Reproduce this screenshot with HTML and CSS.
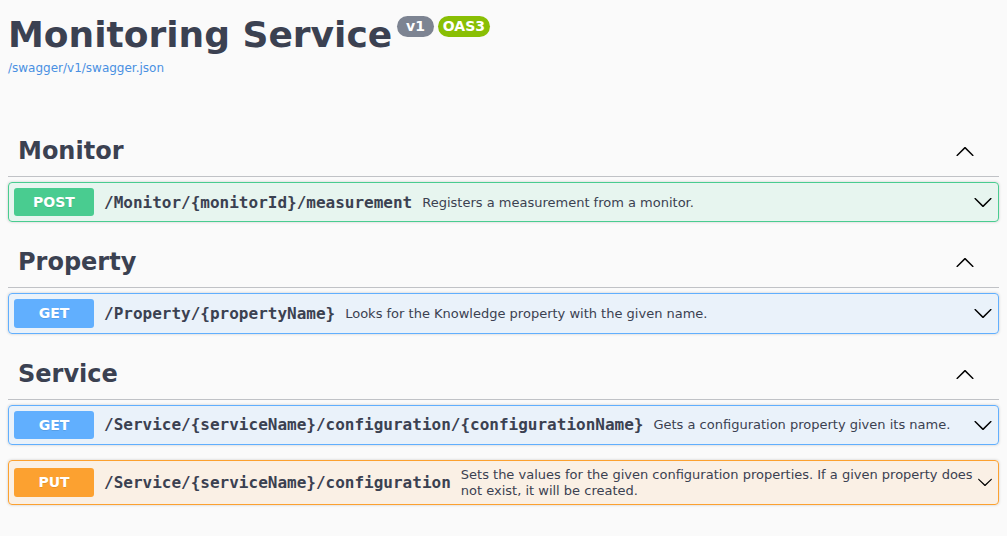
FILE: index.html
```html
<!DOCTYPE html>
<html lang="en">
<head>
<meta charset="utf-8">
<title>Monitoring Service</title>
<link rel="stylesheet" href="styles.css">
</head>
<body>
<div class="page">
  <header class="info">
    <h2 class="title">
      <span class="title-text">Monitoring Service</span>
      <small class="badge badge-version"><span class="badge-text"> v1 </span></small>
      <small class="badge badge-oas"><span class="badge-text">OAS3</span></small>
    </h2>
    <a class="spec-link" href="#">/swagger/v1/swagger.json</a>
  </header>

  <section class="tag-section">
    <h3 class="tag">
      <span class="tag-name">Monitor</span>
      <button class="expand">
        <svg class="arrow" width="20" height="20" viewBox="0 0 20 20"><path d="M17.418 14.908c.272.268.709.268.979 0s.27-.701 0-.969l-7.908-7.83c-.27-.268-.707-.268-.979 0l-7.908 7.830c-.27.268-.27.701 0 .969.271.268.709.268.979 0L10 7.767l7.418 7.141z"/></svg>
      </button>
    </h3>
    <div class="op op-post">
      <span class="method">POST</span>
      <span class="path">/Monitor/{monitorId}/measurement</span>
      <div class="desc">Registers a measurement from a monitor.</div>
      <button class="toggle">
        <svg class="arrow" width="20" height="20" viewBox="0 0 20 20"><path d="M17.418 6.109c.272-.268.709-.268.979 0s.271.701 0 .969l-7.908 7.83c-.27.268-.707.268-.979 0l-7.908-7.83c-.27-.268-.27-.701 0-.969.271-.268.709-.268.979 0L10 13.25l7.418-7.141z"/></svg>
      </button>
    </div>
  </section>

  <section class="tag-section">
    <h3 class="tag">
      <span class="tag-name">Property</span>
      <button class="expand">
        <svg class="arrow" width="20" height="20" viewBox="0 0 20 20"><path d="M17.418 14.908c.272.268.709.268.979 0s.27-.701 0-.969l-7.908-7.83c-.27-.268-.707-.268-.979 0l-7.908 7.830c-.27.268-.27.701 0 .969.271.268.709.268.979 0L10 7.767l7.418 7.141z"/></svg>
      </button>
    </h3>
    <div class="op op-get">
      <span class="method">GET</span>
      <span class="path">/Property/{propertyName}</span>
      <div class="desc">Looks for the Knowledge property with the given name.</div>
      <button class="toggle">
        <svg class="arrow" width="20" height="20" viewBox="0 0 20 20"><path d="M17.418 6.109c.272-.268.709-.268.979 0s.271.701 0 .969l-7.908 7.83c-.27.268-.707.268-.979 0l-7.908-7.83c-.27-.268-.27-.701 0-.969.271-.268.709-.268.979 0L10 13.25l7.418-7.141z"/></svg>
      </button>
    </div>
  </section>

  <section class="tag-section">
    <h3 class="tag">
      <span class="tag-name">Service</span>
      <button class="expand">
        <svg class="arrow" width="20" height="20" viewBox="0 0 20 20"><path d="M17.418 14.908c.272.268.709.268.979 0s.27-.701 0-.969l-7.908-7.83c-.27-.268-.707-.268-.979 0l-7.908 7.830c-.27.268-.27.701 0 .969.271.268.709.268.979 0L10 7.767l7.418 7.141z"/></svg>
      </button>
    </h3>
    <div class="op op-get">
      <span class="method">GET</span>
      <span class="path">/Service/{serviceName}/configuration/{configurationName}</span>
      <div class="desc">Gets a configuration property given its name.</div>
      <button class="toggle">
        <svg class="arrow" width="20" height="20" viewBox="0 0 20 20"><path d="M17.418 6.109c.272-.268.709-.268.979 0s.271.701 0 .969l-7.908 7.83c-.27.268-.707.268-.979 0l-7.908-7.83c-.27-.268-.27-.701 0-.969.271-.268.709-.268.979 0L10 13.25l7.418-7.141z"/></svg>
      </button>
    </div>
    <div class="op op-put">
      <span class="method">PUT</span>
      <span class="path">/Service/{serviceName}/configuration</span>
      <div class="desc desc-wrap">Sets the values for the given configuration properties. If a given property does not exist, it will be created.</div>
      <button class="toggle">
        <svg class="arrow arrow-sm" width="16" height="20" viewBox="0 0 20 20"><path d="M17.418 6.109c.272-.268.709-.268.979 0s.271.701 0 .969l-7.908 7.83c-.27.268-.707.268-.979 0l-7.908-7.83c-.27-.268-.27-.701 0-.969.271-.268.709-.268.979 0L10 13.25l7.418-7.141z"/></svg>
      </button>
    </div>
  </section>
</div>
</body>
</html>
```

FILE: styles.css
```css
html, body {
  margin: 0;
  padding: 0;
  background: #fafafa;
}

body {
  font-family: "DejaVu Sans", sans-serif;
  color: #3b4151;
}

.page {
  padding: 14px 8px 0 8px;
}

/* ---------- info header ---------- */
.info {
  margin-bottom: 51px;
}

.title {
  display: flex;
  align-items: flex-start;
  margin: 0;
  font-size: 36px;
  font-weight: bold;
  line-height: 42px;
  color: #3b4151;
}

.title-text {
  display: block;
}

.badge {
  display: inline-block;
  margin: 2px 0 0 5px;
  padding: 2px 4px;
  border-radius: 57px;
  background: #7d8492;
  font-size: 14px;
  line-height: 17px;
  font-weight: bold;
  color: #fff;
}

.badge + .badge {
  margin-left: 4px;
}

.badge-oas {
  background: #89bf04;
  padding: 2px 5px;
}

.badge-text {
  white-space: pre;
}

.spec-link {
  display: block;
  width: max-content;
  margin-top: 5px;
  font-size: 12px;
  line-height: 14px;
  color: #4990e2;
  text-decoration: none;
}

/* ---------- tag sections ---------- */
.tag-section {
  display: flex;
  flex-direction: column;
}

.tag {
  display: flex;
  align-items: center;
  margin: 0 0 5px;
  padding: 10px 24px 10px 10px;
  border-bottom: 1px solid rgba(59, 65, 81, 0.3);
  font-size: 24px;
  font-weight: bold;
  line-height: 30px;
  color: #3b4151;
}

.tag-name {
  flex: 1;
}

.expand,
.toggle {
  display: flex;
  align-items: center;
  border: none;
  background: none;
  padding: 0;
  margin: 0;
}

.arrow {
  display: block;
  fill: #000;
}

/* ---------- operations ---------- */
.op {
  display: flex;
  align-items: center;
  margin: 0 0 15px;
  padding: 5px;
  border: 1px solid #000;
  border-radius: 4px;
  box-shadow: 0 0 3px rgba(0, 0, 0, 0.19);
}

.method {
  flex: none;
  min-width: 80px;
  padding: 6px 0;
  border-radius: 3px;
  text-align: center;
  font-size: 14px;
  font-weight: bold;
  line-height: 16.3px;
  color: #fff;
  text-shadow: 0 1px 0 rgba(0, 0, 0, 0.1);
}

.path {
  flex: none;
  padding: 0 10px;
  font-family: "DejaVu Sans Mono", monospace;
  font-size: 16px;
  font-weight: bold;
  color: #3b4151;
}

.desc {
  flex: 1 1 auto;
  font-size: 13px;
  line-height: 15px;
  color: #3b4151;
}

.desc-wrap {
  line-height: 16px;
  padding: 1px 4px 0 0;
}

.op-post {
  border-color: #49cc90;
  background: rgba(73, 204, 144, 0.1);
}
.op-post .method {
  background: #49cc90;
}

.op-get {
  border-color: #61affe;
  background: rgba(97, 175, 254, 0.1);
}
.op-get .method {
  background: #61affe;
}

.op-put {
  border-color: #fca130;
  background: rgba(252, 161, 48, 0.1);
}
.op-put .method {
  background: #fca130;
}
```
